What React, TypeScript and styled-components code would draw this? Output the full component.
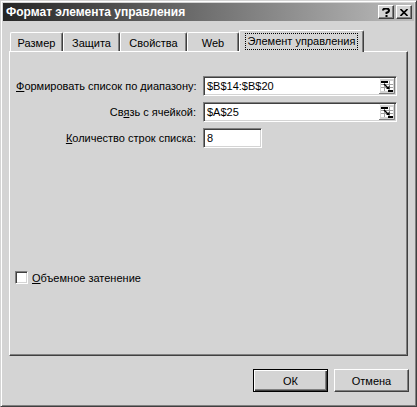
import styled, { createGlobalStyle } from "styled-components";

const Global = createGlobalStyle`
  html, body { margin: 0; padding: 0; background: #d4d4d4; }
  body {
    font-family: "Liberation Sans", Arial, sans-serif;
    font-size: 11px;
    color: #000;
  }
`;

const Window = styled.div`
  width: 417px;
  height: 407px;
  box-sizing: border-box;
  background: #d4d4d4;
  border-top: 1px solid #d4d4d4;
  border-left: 1px solid #d4d4d4;
  border-right: 1px solid #404040;
  border-bottom: 1px solid #404040;
  box-shadow: inset 1px 1px #fff, inset -1px -1px #808080;
  padding: 2px;
  display: flex;
  flex-direction: column;
`;

const TitleBar = styled.div`
  height: 18px;
  display: flex;
  align-items: center;
  padding: 0 2px 0 3px;
  background: linear-gradient(to right, #262626, #bcbcbc);
  color: #fff;
  font-weight: bold;
  font-size: 12px;
`;

const Title = styled.span`
  flex: 1;
`;

const CapButton = styled.div`
  width: 16px;
  height: 14px;
  box-sizing: border-box;
  background: #d4d4d4;
  border-top: 1px solid #fff;
  border-left: 1px solid #fff;
  border-right: 1px solid #404040;
  border-bottom: 1px solid #404040;
  box-shadow: inset -1px -1px #808080;
  display: flex;
  align-items: center;
  justify-content: center;
  color: #000;
  margin-left: ${(p: { gap?: number }) => p.gap ?? 0}px;
`;

const TabStrip = styled.div`
  display: flex;
  align-items: flex-end;
  height: 21px;
  margin: 9px 0 0 7px;
`;

const Tab = styled.div<{ w: number; active?: boolean }>`
  width: ${(p) => p.w}px;
  height: ${(p) => (p.active ? 22 : 19)}px;
  margin-bottom: ${(p) => (p.active ? -1 : 0)}px;
  position: relative;
  z-index: ${(p) => (p.active ? 1 : 0)};
  box-sizing: border-box;
  background: #d4d4d4;
  border-top: 1px solid #fff;
  border-left: 1px solid #fff;
  border-right: 1px solid #404040;
  border-radius: 2px 2px 0 0;
  box-shadow: inset -1px 0 #808080;
  display: flex;
  align-items: center;
  justify-content: center;
  padding-top: ${(p) => (p.active ? 0 : 2)}px;
`;

const Focus = styled.span`
  outline: 1px dotted #000;
  outline-offset: 0;
  padding: 1px 2px;
  line-height: 13px;
`;

const Panel = styled.div`
  height: 305px;
  margin: 0 6px;
  box-sizing: border-box;
  border-top: 1px solid #fff;
  border-left: 1px solid #fff;
  border-right: 1px solid #404040;
  border-bottom: 1px solid #404040;
  box-shadow: inset -1px -1px #808080;
  padding: 24px 0 0 5px;
  display: flex;
  flex-direction: column;
`;

const Form = styled.div`
  display: grid;
  grid-template-columns: 180px auto;
  grid-auto-rows: 20px;
  column-gap: 7px;
  row-gap: 6px;
  margin-left: 1px;
  align-items: center;
`;

const Label = styled.label`
  text-align: right;
  white-space: nowrap;
`;

const Field = styled.div<{ w: number }>`
  width: ${(p) => p.w}px;
  height: 20px;
  box-sizing: border-box;
  background: #fff;
  border-top: 1px solid #808080;
  border-left: 1px solid #808080;
  border-right: 1px solid #fff;
  border-bottom: 1px solid #fff;
  box-shadow: inset 1px 1px #404040, inset -1px -1px #d4d4d4;
  display: flex;
  align-items: center;
  padding: 0 1px 0 3px;
`;

const FieldText = styled.span`
  flex: 1;
`;

const CheckRow = styled.div`
  display: flex;
  align-items: center;
  gap: 4px;
  margin-top: 123px;
`;

const CheckBox = styled.div`
  width: 13px;
  height: 13px;
  box-sizing: border-box;
  background: #fff;
  border-top: 1px solid #808080;
  border-left: 1px solid #808080;
  border-right: 1px solid #fff;
  border-bottom: 1px solid #fff;
  box-shadow: inset 1px 1px #404040, inset -1px -1px #d4d4d4;
`;

const Buttons = styled.div`
  display: flex;
  justify-content: flex-end;
  gap: 6px;
  margin-top: 13px;
  padding-right: 5px;
`;

const Button = styled.div<{ primary?: boolean }>`
  width: 75px;
  height: 23px;
  box-sizing: border-box;
  background: #d4d4d4;
  display: flex;
  align-items: center;
  justify-content: center;
  ${(p) =>
    p.primary
      ? `border: 1px solid #000;
         box-shadow: inset 1px 1px #fff, inset -1px -1px #404040, inset -2px -2px #808080;`
      : `border-top: 1px solid #fff;
         border-left: 1px solid #fff;
         border-right: 1px solid #404040;
         border-bottom: 1px solid #404040;
         box-shadow: inset -1px -1px #808080;`}
`;

const U = styled.u`
  text-decoration: underline;
`;

function RefEditIcon() {
  return (
    <svg width="16" height="16" viewBox="0 0 16 16">
      <rect x="0" y="0" width="16" height="16" fill="#d4d4d4" />
      <path d="M0 15.5H15.5V0" stroke="#808080" fill="none" />
      <path d="M0.5 15V0.5H15" stroke="#fff" fill="none" />
      <rect x="2" y="3" width="12" height="10" fill="#fff" />
      <path d="M2 6.5H14M2 9.5H14M5.5 3V13M10.5 3V13" stroke="#a0a0a0" fill="none" />
      <rect x="2" y="3" width="7" height="2" fill="#000" />
      <path d="M5 6L10 11" stroke="#000" strokeWidth="1.4" />
      <path d="M7 11H10.5V7.5Z" fill="#000" />
      <rect x="9" y="12" width="5" height="2" fill="#000" />
    </svg>
  );
}

export default function App() {
  return (
    <>
      <Global />
      <Window>
        <TitleBar>
          <Title>Формат элемента управления</Title>
          <CapButton>
            <svg width="8" height="9" viewBox="0 0 8 9">
              <path d="M1 2.5Q1 0.5 4 0.5Q7 0.5 7 2.5Q7 4 4.5 4.8V6" stroke="#000" strokeWidth="2" fill="none" />
              <rect x="3.5" y="7" width="2" height="2" fill="#000" />
            </svg>
          </CapButton>
          <CapButton gap={2}>
            <svg width="8" height="7" viewBox="0 0 8 7">
              <path d="M0.5 0L7.5 7M7.5 0L0.5 7" stroke="#000" strokeWidth="1.6" />
            </svg>
          </CapButton>
        </TitleBar>

        <TabStrip>
          <Tab w={53}>Размер</Tab>
          <Tab w={57}>Защита</Tab>
          <Tab w={67}>Свойства</Tab>
          <Tab w={52}>Web</Tab>
          <Tab w={125} active>
            <Focus>Элемент управления</Focus>
          </Tab>
        </TabStrip>

        <Panel>
          <Form>
            <Label>
              <U>Ф</U>ормировать список по диапазону:
            </Label>
            <Field w={194}>
              <FieldText>$B$14:$B$20</FieldText>
              <RefEditIcon />
            </Field>
            <Label>
              Св<U>я</U>зь с ячейкой:
            </Label>
            <Field w={194}>
              <FieldText>$A$25</FieldText>
              <RefEditIcon />
            </Field>
            <Label>
              <U>К</U>оличество строк списка:
            </Label>
            <Field w={59}>
              <FieldText>8</FieldText>
            </Field>
          </Form>
          <CheckRow>
            <CheckBox />
            <span>
              <U>О</U>бъемное затенение
            </span>
          </CheckRow>
        </Panel>

        <Buttons>
          <Button primary>ОК</Button>
          <Button>Отмена</Button>
        </Buttons>
      </Window>
    </>
  );
}
